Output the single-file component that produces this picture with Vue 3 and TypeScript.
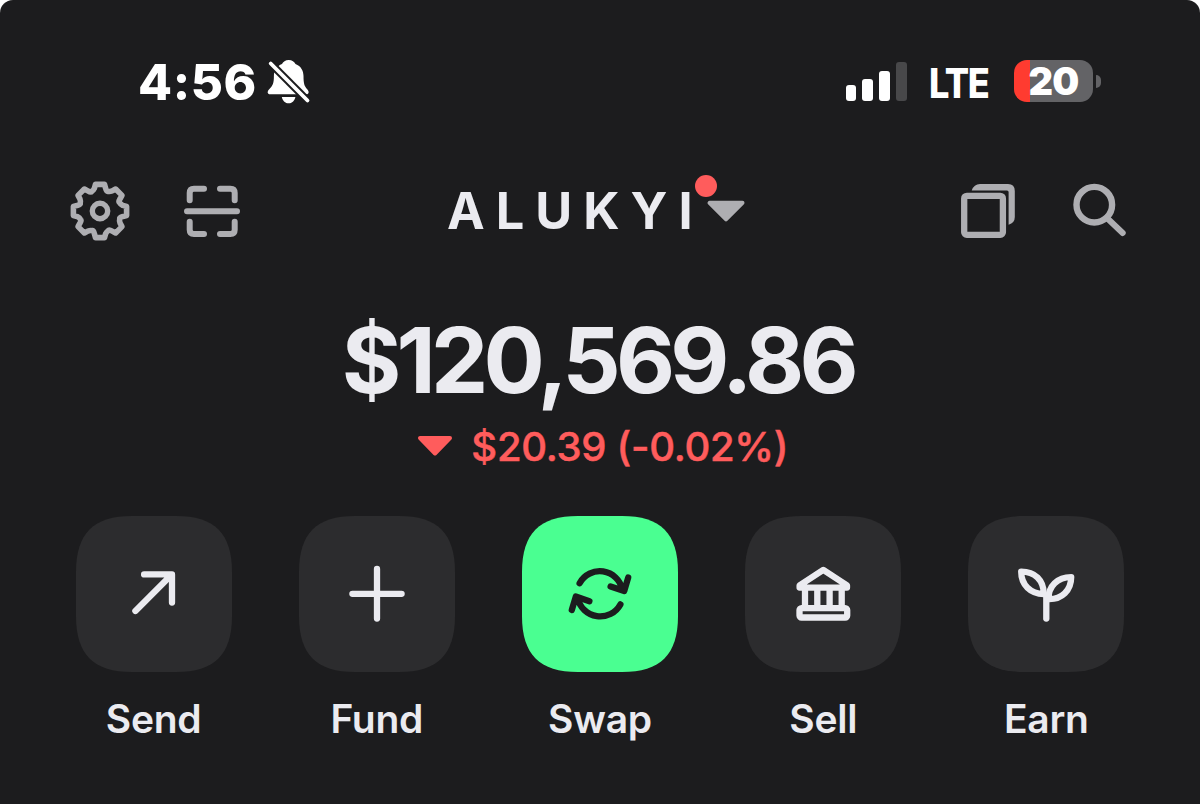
<script setup lang="ts">
interface Action {
  label: string
  icon: 'send' | 'fund' | 'swap' | 'sell' | 'earn'
  primary?: boolean
}

const actions: Action[] = [
  { label: 'Send', icon: 'send' },
  { label: 'Fund', icon: 'fund' },
  { label: 'Swap', icon: 'swap', primary: true },
  { label: 'Sell', icon: 'sell' },
  { label: 'Earn', icon: 'earn' },
]

// Continuous-corner square: e is how far a corner reaches, c its control offset
function squircle(s: number, e: number, c: number): string {
  return (
    `M0 ${e}C0 ${c} ${c} 0 ${e} 0H${s - e}C${s - c} 0 ${s} ${c} ${s} ${e}` +
    `V${s - e}C${s} ${s - c} ${s - c} ${s} ${s - e} ${s}H${e}C${c} ${s} 0 ${s - c} 0 ${s - e}Z`
  )
}

// Eight-tooth gear outline centred on the origin
function gear(): string {
  let d = ''
  for (let i = 0; i < 8; i++) {
    const a = (i * Math.PI) / 4
    const p = (x: number, y: number) =>
      `${(x * Math.cos(a) - y * Math.sin(a)).toFixed(2)} ${(x * Math.sin(a) + y * Math.cos(a)).toFixed(2)}`
    d += `${i ? 'L' : 'M'}${p(-5.6, -22.8)}L${p(-4.5, -26.6)}L${p(4.5, -26.6)}L${p(5.6, -22.8)}`
    d += `Q${p(6.4, -19.4)} ${p(8.1, -19.7)}Q${p(9.6, -19.2)} ${p(12.16, -20.08)}`
  }
  return d + 'Z'
}

const tilePath = squircle(156, 56, 17.5)
const gearPath = gear()
</script>

<template>
  <div class="screen">
    <header class="status">
      <div class="clock">
        <span class="time">4:56</span>
        <svg class="bell" width="48" height="50" viewBox="0 0 48 50">
          <path d="M24.7 4C28 4 30.5 5.8 31.5 8C37 10 39.5 15 39.5 20C39.5 28 40.5 30 43 33C45.5 35.6 45 38.3 42.5 38.3H6C3.4 38.3 2.9 35.6 5 33.5C9 29.5 9.9 27 9.9 20C9.9 14 13 10 18 8C19 5.8 21.5 4 24.7 4Z" fill="#fff" />
          <path d="M17.8 41H31.4C30.4 45 28 47.3 24.6 47.3C21.2 47.3 18.8 45 17.8 41Z" fill="#fff" />
          <path d="M6.7 7.5L43.5 44.5" stroke="#1c1c1e" stroke-width="7.6" />
          <path d="M6.7 7.5L43.5 44.5" stroke="#fff" stroke-width="3.8" stroke-linecap="round" />
        </svg>
      </div>
      <div class="signals">
        <div class="bars"><i class="b1" /><i class="b2" /><i class="b3" /><i class="b4" /></div>
        <span class="lte">LTE</span>
        <div class="battery"><span class="level">20</span></div>
        <i class="nub" />
      </div>
    </header>

    <nav class="nav">
      <div class="group left">
        <svg width="60" height="60" viewBox="-30 -30 60 60" class="line">
          <path :d="gearPath" stroke-width="5.6" />
          <circle r="7.7" stroke-width="5.4" />
        </svg>
        <svg width="56" height="60" viewBox="0 0 56 60" class="line">
          <path d="M5.7 19.3V12Q5.7 7.7 10 7.7H20M36 7.7H46.4Q50.7 7.7 50.7 12V19.3M50.7 40.7V48.7Q50.7 53 46.4 53H36M20 53H10Q5.7 53 5.7 48.7V40.7M3 30.2H53" stroke-width="6" />
        </svg>
      </div>
      <div class="account">
        <span class="name">ALUKYI</span>
        <svg width="40" height="24" viewBox="0 0 40 24" class="caret">
          <path d="M3.5 3.8H36.5L20 20.4Z" fill="#aeaeb2" stroke="#aeaeb2" stroke-width="4" stroke-linejoin="round" />
        </svg>
        <i class="dot" />
      </div>
      <div class="group right">
        <svg width="54" height="60" viewBox="961 181 54 60" class="line">
          <rect x="964.2" y="195.8" width="38.7" height="39.1" rx="2.6" stroke-width="6.3" />
          <path class="solid" d="M971.7 190.5Q974 184 980 184H1008Q1014.8 184 1014.8 191V217Q1014.8 223 1008.6 224.7V192Q1008.6 190.5 1007 190.5Z" />
        </svg>
        <svg width="56" height="60" viewBox="1072 181 56 60" class="line">
          <circle cx="1094.3" cy="204.7" r="17.8" stroke-width="6.4" />
          <path d="M1107.5 218.5L1122.7 233" stroke-width="6" />
        </svg>
      </div>
    </nav>

    <main>
      <div class="balance">$120,569.86</div>
      <div class="change">
        <svg width="36" height="22" viewBox="0 0 36 22">
          <path d="M3 3H33L18 18.5Z" fill="#ff5c5c" stroke="#ff5c5c" stroke-width="4" stroke-linejoin="round" />
        </svg>
        <span>$20.39 (-0.02%)</span>
      </div>
      <div class="actions">
        <div v-for="a in actions" :key="a.icon" class="action" :class="{ primary: a.primary }">
          <svg width="156" height="156" viewBox="0 0 156 156" class="tile">
            <path class="bg" :d="tilePath" />
            <g class="glyph">
              <path v-if="a.icon === 'send'" d="M59.4 95L95.8 58.6M68.1 58.4H96V86.6" />
              <path v-else-if="a.icon === 'fund'" d="M53.4 77.8H102.6M78 53V102.5" />
              <g v-else-if="a.icon === 'swap'">
                <path d="M57.6 67.2A23 23 0 0 1 100.3 73.5M88.6 70.4L102.2 75L106.2 61.6" />
                <path d="M98.4 88.4A23 23 0 0 1 55.7 82.1M67.4 85.2L53.8 80.6L49.8 94" />
              </g>
              <g v-else-if="a.icon === 'sell'">
                <path d="M54.6 69.4L78.3 53.9L102 69.4V71.6H54.6Z" />
                <path class="butt" d="M60 73V91M72.3 73V91M84.6 73V91M96.7 73V91" />
                <rect x="54.5" y="92.1" width="47.7" height="9.4" rx="2" />
              </g>
              <g v-else>
                <path d="M78.3 102.5V81" />
                <path d="M53.2 55.6C66.8 55.6 75.6 64 75.8 78C62.4 78 53.2 69 53.2 55.6Z" />
                <path d="M80.4 83.2C80.4 70 89.4 61.1 103.2 61.1C103.2 74.5 93.8 83.6 80.4 83.2Z" />
              </g>
            </g>
          </svg>
          <span class="label">{{ a.label }}</span>
        </div>
      </div>
    </main>
  </div>
</template>

<style>
body {
  margin: 0;
  background: #fff;
}
</style>

<style scoped>
.screen {
  box-sizing: border-box;
  width: 1200px;
  height: 804px;
  background: #1c1c1e;
  border-radius: 13px 13px 0 0;
  overflow: hidden;
  font-family: Inter, "Liberation Sans", sans-serif;
  color: #ebebf0;
}
.screen svg {
  display: block;
  flex: none;
}
.status {
  display: flex;
  justify-content: space-between;
  align-items: center;
  height: 50px;
  padding: 56px 99px 0 138px;
  color: #fff;
}
.clock,
.signals {
  display: flex;
  align-items: center;
}
.time {
  width: 126px;
  padding-top: 2px;
  font-size: 49.5px;
  line-height: 50px;
  font-weight: 800;
  letter-spacing: 0.6px;
  white-space: nowrap;
}
.bars {
  display: flex;
  align-items: flex-end;
  gap: 6px;
  height: 39px;
  margin-right: 22px;
}
.bars i {
  width: 10.8px;
  border-radius: 3px;
  background: #fff;
}
.b1 { height: 16px; }
.b2 { height: 22px; }
.b3 { height: 30px; }
.bars .b4 { height: 39px; background: #48484a; }
.lte {
  width: 85px;
  padding-top: 4px;
  font-size: 41.5px;
  line-height: 50px;
  font-weight: 800;
  letter-spacing: -1.6px;
  white-space: nowrap;
  transform: scaleX(0.87);
  transform-origin: left;
}
.battery {
  display: flex;
  align-items: center;
  justify-content: center;
  width: 79.5px;
  height: 42.5px;
  border-radius: 13px;
  background: linear-gradient(90deg, #ff3b30 16.3px, #636366 16.3px);
}
.level {
  font-size: 38px;
  line-height: 42px;
  font-weight: 900;
  letter-spacing: -0.8px;
}
.nub {
  width: 5px;
  height: 13px;
  margin-left: 2.7px;
  border-radius: 0 6px 6px 0;
  background: #636366;
}
.nav {
  display: grid;
  grid-template-columns: 1fr auto 1fr;
  align-items: center;
  height: 60px;
  margin-top: 75px;
  padding: 0 72px 0 70px;
}
.group {
  display: flex;
}
.left {
  gap: 54px;
}
.right {
  justify-content: flex-end;
  gap: 57px;
}
.line {
  fill: none;
  stroke: #aeaeb2;
  stroke-linecap: round;
  stroke-linejoin: round;
}
.line .solid {
  fill: #aeaeb2;
  stroke: none;
}
.account {
  position: relative;
  display: flex;
  align-items: center;
  width: 304px;
}
.name {
  width: 259px;
  font-size: 50.5px;
  line-height: 60px;
  font-weight: 700;
  letter-spacing: 11px;
  white-space: nowrap;
}
.dot {
  position: absolute;
  left: 248px;
  top: -6px;
  width: 22.4px;
  height: 22.4px;
  border-radius: 50%;
  background: #ff5c5c;
}
.balance {
  margin-top: 64px;
  height: 110px;
  line-height: 110px;
  text-align: center;
  font-size: 91px;
  font-weight: 700;
  letter-spacing: -4.75px;
  text-indent: -4.5px;
}
.change {
  display: flex;
  align-items: center;
  justify-content: center;
  gap: 18px;
  height: 48px;
  margin-top: 7px;
  padding-left: 5.5px;
  color: #ff5c5c;
  font-size: 40px;
  font-weight: 500;
  letter-spacing: -0.3px;
  -webkit-text-stroke: 0.5px #ff5c5c;
  white-space: nowrap;
}
.actions {
  display: flex;
  justify-content: center;
  gap: 67.2px;
  margin-top: 46px;
}
.action {
  display: flex;
  flex-direction: column;
  align-items: center;
  width: 156px;
}
.bg {
  fill: #2c2c2e;
}
.primary .bg {
  fill: #4aff91;
}
.glyph {
  fill: none;
  stroke: #ebebf0;
  stroke-width: 6.3;
  stroke-linecap: round;
  stroke-linejoin: round;
}
.primary .glyph {
  stroke: #1c1c1e;
}
.butt {
  stroke-linecap: butt;
}
.label {
  margin-top: 21.5px;
  font-size: 39px;
  line-height: 50px;
  font-weight: 600;
  letter-spacing: -0.25px;
}
</style>
